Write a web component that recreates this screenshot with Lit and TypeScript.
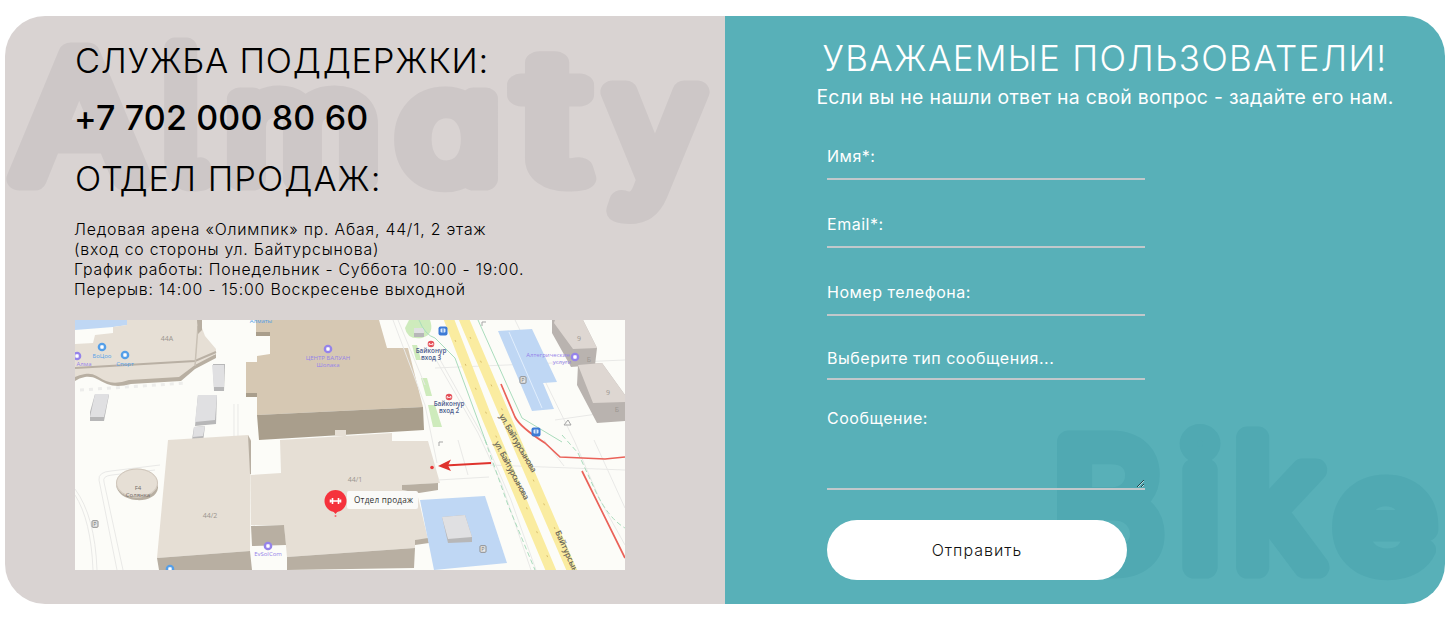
import { LitElement, html, svg, css } from "lit";
import { customElement } from "lit/decorators.js";

// letter, x, advance width, font size
type Glyph = [string, number, number, number];

@customElement("word-mark")
class WordMark extends LitElement {
  static properties = { glyphs: { attribute: false }, baseline: { type: Number } };
  declare glyphs: Glyph[];
  declare baseline: number;
  static styles = css`
    :host { position: absolute; inset: 0; pointer-events: none; }
    svg { display: block; width: 720px; height: 588px; }
    text {
      font-family: Inter, "Open Sans", sans-serif;
      font-weight: 300;
      font-feature-settings: "cv11" 1, "cv05" 1;
      fill: var(--mark);
      stroke: var(--mark);
      stroke-width: 23px;
      stroke-linejoin: round;
    }
  `;
  render() {
    return html`<svg viewBox="0 0 720 588" aria-hidden="true">
      ${this.glyphs.map(
        ([c, x, w, s]) => svg`<text x=${x} y=${this.baseline} font-size=${s} textLength=${w} lengthAdjust="spacingAndGlyphs">${c}</text>`
      )}
    </svg>`;
  }
}

@customElement("location-map")
class LocationMap extends LitElement {
  static styles = css`
    :host { display: block; width: 550px; height: 250px; }
    svg { display: block; font-family: "Open Sans", "Noto Sans", sans-serif; }
    .roof { fill: #e6dfd5; }
    .wall { fill: #b8afa2; }
    .tan { fill: #d6c8b3; }
    .tanwall { fill: #a99e8c; }
    .grey { fill: #e0e0e2; }
    .greywall { fill: #b7b7b8; }
    .water { fill: #bfd7f4; }
    .park { fill: #c6e8b2; }
    .road { fill: none; stroke: #faeca0; stroke-width: 10; }
    .path { fill: none; stroke: #e9e9e7; stroke-width: 1; }
    .green { fill: none; stroke: #a9dcbc; stroke-width: 1; }
    .dash { stroke-dasharray: 5 3; }
    .red { fill: none; stroke: #ea6259; stroke-width: 1.7; stroke-linejoin: round; }
    .violet { fill: #9583ea; }
    .blue { fill: #559fe8; }
    .num { font-size: 7px; fill: #9b958f; text-anchor: middle; }
    .poi { font-size: 6px; text-anchor: middle; }
    .metro { font-size: 6.3px; font-weight: 600; fill: #4b5b8c; text-anchor: middle; }
    .street { font-size: 8.2px; font-weight: 600; fill: #6a675a; }
    .tag { font-size: 8.2px; fill: #333; }
  `;
  dot(x: number, y: number, kind: string) {
    return svg`<circle class=${kind} cx=${x} cy=${y} r="4.3"/><rect x=${x - 1.7} y=${y - 1.7} width="3.4" height="3.4" rx=".7" fill="#fff"/>`;
  }
  parking(x: number, y: number) {
    return svg`<rect x=${x - 3} y=${y - 3.3} width="6" height="6.6" rx="1" fill="#e9e9e9" stroke="#8d8d8d"/><text x=${x} y=${y + 2} font-size="5.5" text-anchor="middle" fill="#777">P</text>`;
  }
  busStop(x: number, y: number) {
    return svg`<rect x=${x - 4.5} y=${y - 4.5} width="9" height="9" rx="2" fill="#3d7bd5"/><rect x=${x - 2.5} y=${y - 2.5} width="5" height="4" rx="1" fill="#d9e8fc"/><path d="M${x} ${y - 2.5}v4" stroke="#3d7bd5"/>`;
  }
  metro(x: number, y: number) {
    return svg`<circle cx=${x} cy=${y} r="3.3" fill="#e45058"/><path d="M${x - 1.8} ${y + 1.3}v-2l1.8 1.5 1.8-1.5v2" fill="none" stroke="#fff" stroke-width=".9"/>`;
  }
  render() {
    return html`<svg width="550" height="250" viewBox="0 0 550 250">
      <rect width="550" height="250" fill="#fcfcf8"/>
      <path class="water" d="M0 0H53V5L38 7 0 10Z"/>
      <path class="wall" d="M0 49 120 41 141 34V38L120 49 106 61 56 64Q42 68 32 64C22 60 20 56 10 57Q4 58 0 61Z"/>
      <path class="roof" d="M18 23 20 15 38 13V7L52 5V0H124L130 16 141 29V34L120 45 104 57 54 60Q40 65 31 61C20 56 20 53 10 54Q4 55 0 57V24Z"/>
      <path d="M0 48 120 41 141 32" fill="none" stroke="#b9b0a4" stroke-width="2"/><path d="M120 46 123 6" fill="none" stroke="#c9c1b5" stroke-width="1.5"/>
      <path class="wall" d="M122 0H127V10L123 14Z"/>
      <path d="M5 70 112 63" stroke="#ededeb" stroke-width="3" stroke-dasharray="4 5"/>
      <path class="greywall" d="M138 44H150L149 71H139Z"/><path class="grey" d="M137 45H149V67H139Z"/>
      <path class="greywall" d="M20 74 34 75 29 101H15V92Z"/><path class="grey" d="M20 74H34L29 97H15Z"/>
      <path class="greywall" d="M123 75H142L141 104 120 106Z"/><path class="grey" d="M123 75H142L140 100 120 102Z"/>
      <path class="greywall" d="M119 107 130 106 128 122 117 120Z"/><path class="grey" d="M119 107 130 106 128 116 118 117Z"/>
      <path class="path" d="M159 84V121M163 84V121M0 175Q16 200 18 250M0 169Q20 196 22 250M42 250 24 160Q23 152 36 151L85 145M48 250 29 162Q27 156 37 155L80 150"/>

      <path class="tan" d="M181 0H304L312 28H333L348 87 182 95V77H171V42H182V36L195 34V16H181Z"/>
      <path class="tanwall" d="M182 95 348 87 349 110 184 120ZM181 12H195V16H181ZM171 73H182V77H171Z"/>
      <path class="roof" d="M205 120 317 113V121H353L365 163 327 165V170L342 173 353 219 340 220V228L212 237 209 205H176V155L206 153Z"/>
      <path class="roof" d="M260 110H271V116H260Z"/>
      <path class="wall" d="M176 206 209 205 211 225 177 226ZM212 237 340 228 339 248 212 250ZM327 165 363 163V170L344 173 327 170ZM340 220 353 218 354 223 340 225Z"/>
      <path class="roof" d="M93 120 173 115 176 120 175 231 82 238Z"/>
      <path class="wall" d="M82 238 175 231 177 250H84ZM173 115 176 121V154H175Z"/>
      <path class="wall" d="M41 165H83V168C82 177 71 181 61 180 50 179 42 173 41 165Z"/>
      <ellipse class="roof" cx="62" cy="163" rx="21" ry="14.5"/><ellipse cx="62" cy="163" rx="20.5" ry="14" fill="none" stroke="#cfc6bb"/>

      <path class="park" d="M334 0H355Q360 14 347 18 332 20 330 8ZM337 25H342L346 40H341ZM346 58H352L357 76H351ZM353 85H360L367 107H358Z" opacity=".85"/>
      <path class="greywall" d="M339 8H349V17H339Z"/><path class="grey" d="M339 8H349V13H339Z"/>
      <path class="path" d="M318 0 350 85 362 143M323 0 350 65M360 38 403 113 427 165 456 250M363 36 410 120 436 180 461 250M360 48 550 40M415 145 550 150M440 0 499 120 525 180 550 225M480 100 550 90M469 120 489 146M519 120 550 188M363 160 414 157M383 120 393 155"/>
      <path class="green" d="M344 0Q350 15 360 18L380 38 412 125"/><path class="green" d="M403 0 432 65 447 98 487 122"/>
      <path class="green dash" d="M410 120 433 185 460 250M487 115 503 133 520 170Q533 198 550 208"/>
      <path class="road" d="M373-3 412 98 477 253M388-3 428 91 498 253"/>
      <path d="M380 20 476 245M395 17 492 236" fill="none" stroke="#d8bd6b" stroke-dasharray="2 24"/>
      <path class="water" d="M423 11 457 9 482 62 468 63 479 89 457 91Z"/><path d="M434 12 467 88" stroke="#eaf4ff" stroke-width=".8"/>
      <path class="water" d="M345 180 410 176 432 243 359 250Z"/>
      <path class="greywall" d="M367 197 390 195 397 217V222L373 223 368 201Z"/><path class="grey" d="M367 197 390 195 397 217 373 219Z"/>
      <path fill="#b9b3af" d="M477 0H508L522 28 520 45 496 47 477 13ZM503 45 527 43 550 75V101L522 103 502 65Z"/>
      <path fill="#ded7d2" d="M480 0H508L522 28 498 29 479 3ZM503 45 527 43 550 75V82L518 83Z"/>

      <path class="red" d="M426 64 440 97Q445 107 470 123L485 137 530 139 550 137M507 151 550 238"/>
      <path d="M416 143 370 145.5" stroke="#df332d" stroke-width="2"/><path d="M363 146 376 139.5 373 145.5 376 151Z" fill="#df332d"/><circle cx="357" cy="147.5" r="1.8" fill="#e93636"/>

      <text class="num" x="92" y="21">44A</text><text class="num" x="135" y="198">44/2</text><text class="num" x="280" y="162">44/1</text>
      <text class="num" x="504" y="21">9</text><text class="num" x="533" y="75">9</text><text class="num" x="514" y="42">Б</text><text class="num" x="542" y="92">Б</text>
      ${this.dot(27, 27, "blue")}${this.dot(50, 35, "blue")}${this.dot(2, 36, "violet")}${this.dot(253, 29, "violet")}${this.dot(500, 37, "violet")}${this.dot(193, 226, "violet")}${this.dot(95, 249, "blue")}
      <text class="poi blue" x="27" y="38">БоЦоо</text><text class="poi blue" x="50" y="46">Спорт</text><text class="poi violet" x="9" y="46">Алма</text>
      <text class="poi blue" x="186" y="3">Алматы</text>
      <text class="poi violet" x="253" y="40">ЦЕНТР БАЛУАН</text><text class="poi violet" x="253" y="47">Шолака</text>
      <text class="poi violet" x="473" y="37">Алтегрические</text><text class="poi violet" x="487" y="44">услуги</text>
      <rect x="178" y="231" width="32" height="19" fill="#fcfcf8"/><text class="poi violet" x="193" y="236">EvSolCom</text>
      <text class="poi" fill="#746d68" x="63" y="170">F4</text><text class="poi" fill="#746d68" x="63" y="177">Солянка</text>
      ${this.busStop(368, 11)}${this.busStop(461, 112)}${this.metro(356, 24)}${this.metro(374, 77)}
      <text class="metro" x="356" y="33">Байконур</text><text class="metro" x="356" y="40">вход 3</text>
      <text class="metro" x="374" y="86">Байконур</text><text class="metro" x="374" y="93">вход 2</text>
      ${this.parking(448, 60)}${this.parking(20, 204)}${this.parking(408, 229)}
      <path d="M407 6V2H411M364 126V122H368M489 105 493 100 496 105Z" fill="none" stroke="#a5a5a5"/>
      <text class="street" textLength="66" transform="translate(424 96) rotate(60)">ул. Байтурсынова</text>
      <text class="street" textLength="65" transform="translate(419 123) rotate(62)">ул. Байтурсынова</text>
      <text class="street" transform="translate(480 212) rotate(66)">Байтурсынова</text>

      <rect x="272" y="171" width="71" height="18" rx="2" fill="#fafaf8"/><text class="tag" x="279" y="183" textLength="59">Отдел продаж</text>
      <circle cx="260.5" cy="181" r="11" fill="#f5323c"/><path d="M257 190H264L260.5 194Z" fill="#f5323c"/><circle cx="260.5" cy="196" r="1" fill="#f5666d"/>
      <path d="M255.3 181H265.7M257.5 178V184M263.5 178V184M255.5 179.5V182.5M265.5 179.5V182.5" stroke="#fff" stroke-width="1.6"/>
    </svg>`;
  }
}

@customElement("app-root")
class AppRoot extends LitElement {
  static styles = css`
    :host { display: block; box-sizing: border-box; height: 620px; padding: 16px 8px 16px 5px; background: #fff; font-family: Inter, "Open Sans", sans-serif; }
    .card { display: flex; height: 588px; border-radius: 40px; overflow: hidden; }
    .side { position: relative; box-sizing: border-box; width: 720px; height: 588px; }
    .info { background: #d9d3d2; --mark: #cdc7c7; color: #000; padding: 25px 70px 0; }
    .ask { background: #58b0b8; --mark: #50a9b2; color: #fff; }
    .body { position: relative; }
    .info h2 { margin: 0; font-size: 34.5px; font-weight: 300; line-height: 40px; white-space: nowrap; }
    .support { letter-spacing: 0.75px; }
    .phone { margin: 17px 0 21px -1px; font-size: 34px; font-weight: 500; line-height: 40px; letter-spacing: 0.15px; white-space: nowrap; }
    .sales { letter-spacing: 1px; }
    .address { margin: 21px 0 20px -1px; font-size: 15.8px; font-weight: 300; line-height: 20px; letter-spacing: 0.8px; white-space: nowrap; }
    .ask .body { padding: 22px 0 0 40px; }
    .ask h2 { margin: 0; text-align: center; font-size: 35px; font-weight: 300; line-height: 40px; letter-spacing: 1.3px; white-space: nowrap; }
    .lead { margin: 8px 0 0; text-align: center; font-size: 19.4px; line-height: 22px; letter-spacing: 0.3px; white-space: nowrap; }
    form { display: flex; flex-direction: column; width: 318px; margin: 28px 0 0 62px; }
    input, textarea, select, button { box-sizing: border-box; font-family: inherit; margin: 0; }
    input, textarea, select {
      width: 318px; border: 0; border-bottom: 2px solid #c1c8cb; border-radius: 0; outline: none; appearance: none;
      padding: 0 0 2px; background: transparent; color: #fff; font-size: 16px; letter-spacing: 0.52px;
    }
    input { height: 44px; margin-bottom: 24px; }
    select { height: 40px; }
    textarea { height: 84px; margin-top: 26px; padding: 2px 0; line-height: 20px; }
    ::placeholder { color: #fff; opacity: 1; }
    button { width: 300px; height: 60px; margin-top: 30px; border: 0; border-radius: 30px; background: #fff; color: #111; font-size: 16px; font-weight: 300; letter-spacing: 1px; }
  `;
  render() {
    const almaty: Glyph[] = [["A", 9, 131, 172], ["l", 156, 44, 178], ["m", 221, 153, 147], ["a", 393, 101, 147], ["t", 515, 66, 172], ["y", 602, 96, 160]];
    const bike: Glyph[] = [["B", 327, 112, 172], ["i", 454, 42, 177], ["k", 508, 89, 177], ["e", 611, 98, 147]];
    return html`<main class="card">
      <section class="side info">
        <word-mark .glyphs=${almaty} .baseline=${163}></word-mark>
        <div class="body">
          <h2 class="support">СЛУЖБА ПОДДЕРЖКИ:</h2>
          <p class="phone">+7 702 000 80 60</p>
          <h2 class="sales">ОТДЕЛ ПРОДАЖ:</h2>
          <p class="address">Ледовая арена «Олимпик» пр. Абая, 44/1, 2 этаж<br />(вход со стороны ул. Байтурсынова)<br />График работы: Понедельник - Суббота 10:00 - 19:00.<br />Перерыв: 14:00 - 15:00 Воскресенье выходной</p>
          <location-map></location-map>
        </div>
      </section>
      <section class="side ask">
        <word-mark .glyphs=${bike} .baseline=${551}></word-mark>
        <div class="body">
          <h2>УВАЖАЕМЫЕ ПОЛЬЗОВАТЕЛИ!</h2>
          <p class="lead">Если вы не нашли ответ на свой вопрос - задайте его нам.</p>
          <form @submit=${(e: Event) => e.preventDefault()}>
            <input type="text" placeholder="Имя*:" />
            <input type="email" placeholder="Email*:" />
            <input type="tel" placeholder="Номер телефона:" />
            <select><option>Выберите тип сообщения...</option></select>
            <textarea placeholder="Сообщение:"></textarea>
            <button type="submit">Отправить</button>
          </form>
        </div>
      </section>
    </main>`;
  }
}
